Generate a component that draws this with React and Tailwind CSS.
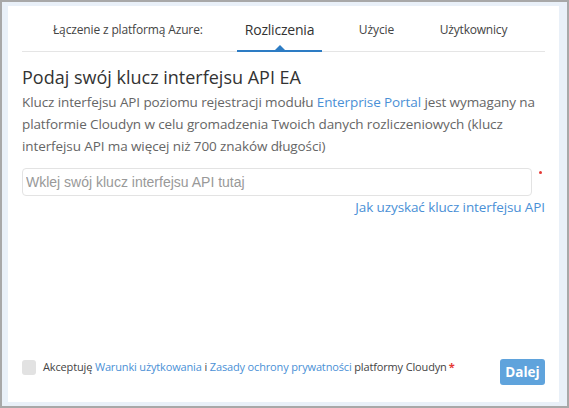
import React from "react";

const font = { fontFamily: '"Open Sans", "Noto Sans", sans-serif' };

export default function App() {
  return (
    <div
      className="w-[569px] h-[408px] border-2 border-[#a8a8a8] bg-[#e9f0f8] pl-[6px] pt-[4px] pr-[8px] pb-[4px]"
      style={font}
    >
      <div className="h-full bg-white flex flex-col px-[14px]">
        {/* Tabs */}
        <div className="flex border-b border-[#e5e5e5] pt-[14px]">
          <div className="w-[209px] pl-[31px] pb-[11px] text-[12px] tracking-[-0.15px] leading-[20px] text-[#444] whitespace-nowrap">
            Łączenie z platformą Azure:
          </div>
          <div className="relative w-[97px] pb-[11px] text-center text-[14px] tracking-[-0.2px] leading-[20px] text-[#333]">
            Rozliczenia
            <div className="absolute left-[6px] right-[6px] bottom-[-1px] h-[2px] bg-[#2d7cc4]" />
            <div className="absolute left-1/2 -translate-x-1/2 bottom-[1px] w-0 h-0 border-l-[5px] border-r-[5px] border-b-[5px] border-l-transparent border-r-transparent border-b-[#2d7cc4]" />
          </div>
          <div className="w-[97px] pb-[11px] text-center text-[12px] tracking-[-0.1px] leading-[20px] text-[#444]">
            Użycie
          </div>
          <div className="w-[97px] pb-[11px] text-center text-[12px] tracking-[-0.2px] leading-[20px] text-[#444]">
            Użytkownicy
          </div>
        </div>

        {/* Heading */}
        <h1 className="mt-[13px] text-[18px] leading-[24px] text-[#333] whitespace-nowrap">
          Podaj swój klucz interfejsu API EA
        </h1>
        <p className="mt-[2px] text-[13.5px] tracking-[-0.1px] leading-[22px] text-[#666] whitespace-nowrap">
          Klucz interfejsu API poziomu rejestracji modułu{" "}
          <span className="text-[#4a90d6]">Enterprise Portal</span> jest wymagany na
          <br />
          platformie Cloudyn w celu gromadzenia Twoich danych rozliczeniowych (klucz
          <br />
          interfejsu API ma więcej niż 700 znaków długości)
        </p>

        {/* Input */}
        <div className="mt-[11px] flex items-start">
          <input
            className="w-[510px] h-[28px] border border-[#e3e3e3] rounded-[4px] px-[3px] text-[14px] text-[#333] placeholder:text-[#999] outline-none"
            style={{ fontFamily: '"Liberation Sans", Arial, sans-serif' }}
            placeholder="Wklej swój klucz interfejsu API tutaj"
          />
          <span className="ml-[7px] mt-[3px] w-[3px] h-[3px] rounded-full bg-[#e53935]" />
        </div>
        <div className="flex justify-end">
          <a className="text-[13.5px] tracking-[-0.1px] leading-[22px] text-[#4a90d6]">Jak uzyskać klucz interfejsu API</a>
        </div>

        {/* Bottom row */}
        <div className="mt-auto mb-[17px] flex justify-between items-start">
          <div className="mt-[1px] flex items-center h-[15px] whitespace-nowrap">
            <span className="w-[14px] h-[15px] rounded-[3px] bg-[#e2e2e2]" />
            <span className="ml-[7px] text-[11px] tracking-[-0.15px] text-[#444]">
              Akceptuję <span className="text-[#4a90d6]">Warunki użytkowania</span> i{" "}
              <span className="text-[#4a90d6]">Zasady ochrony prywatności</span> platformy Cloudyn
              <span className="ml-[2px] text-[#e53935] font-bold">*</span>
            </span>
          </div>
          <button className="w-[45px] h-[26px] rounded-[3px] bg-[#5fa3dc] text-white text-[13.5px] font-bold">
            Dalej
          </button>
        </div>
      </div>
    </div>
  );
}
